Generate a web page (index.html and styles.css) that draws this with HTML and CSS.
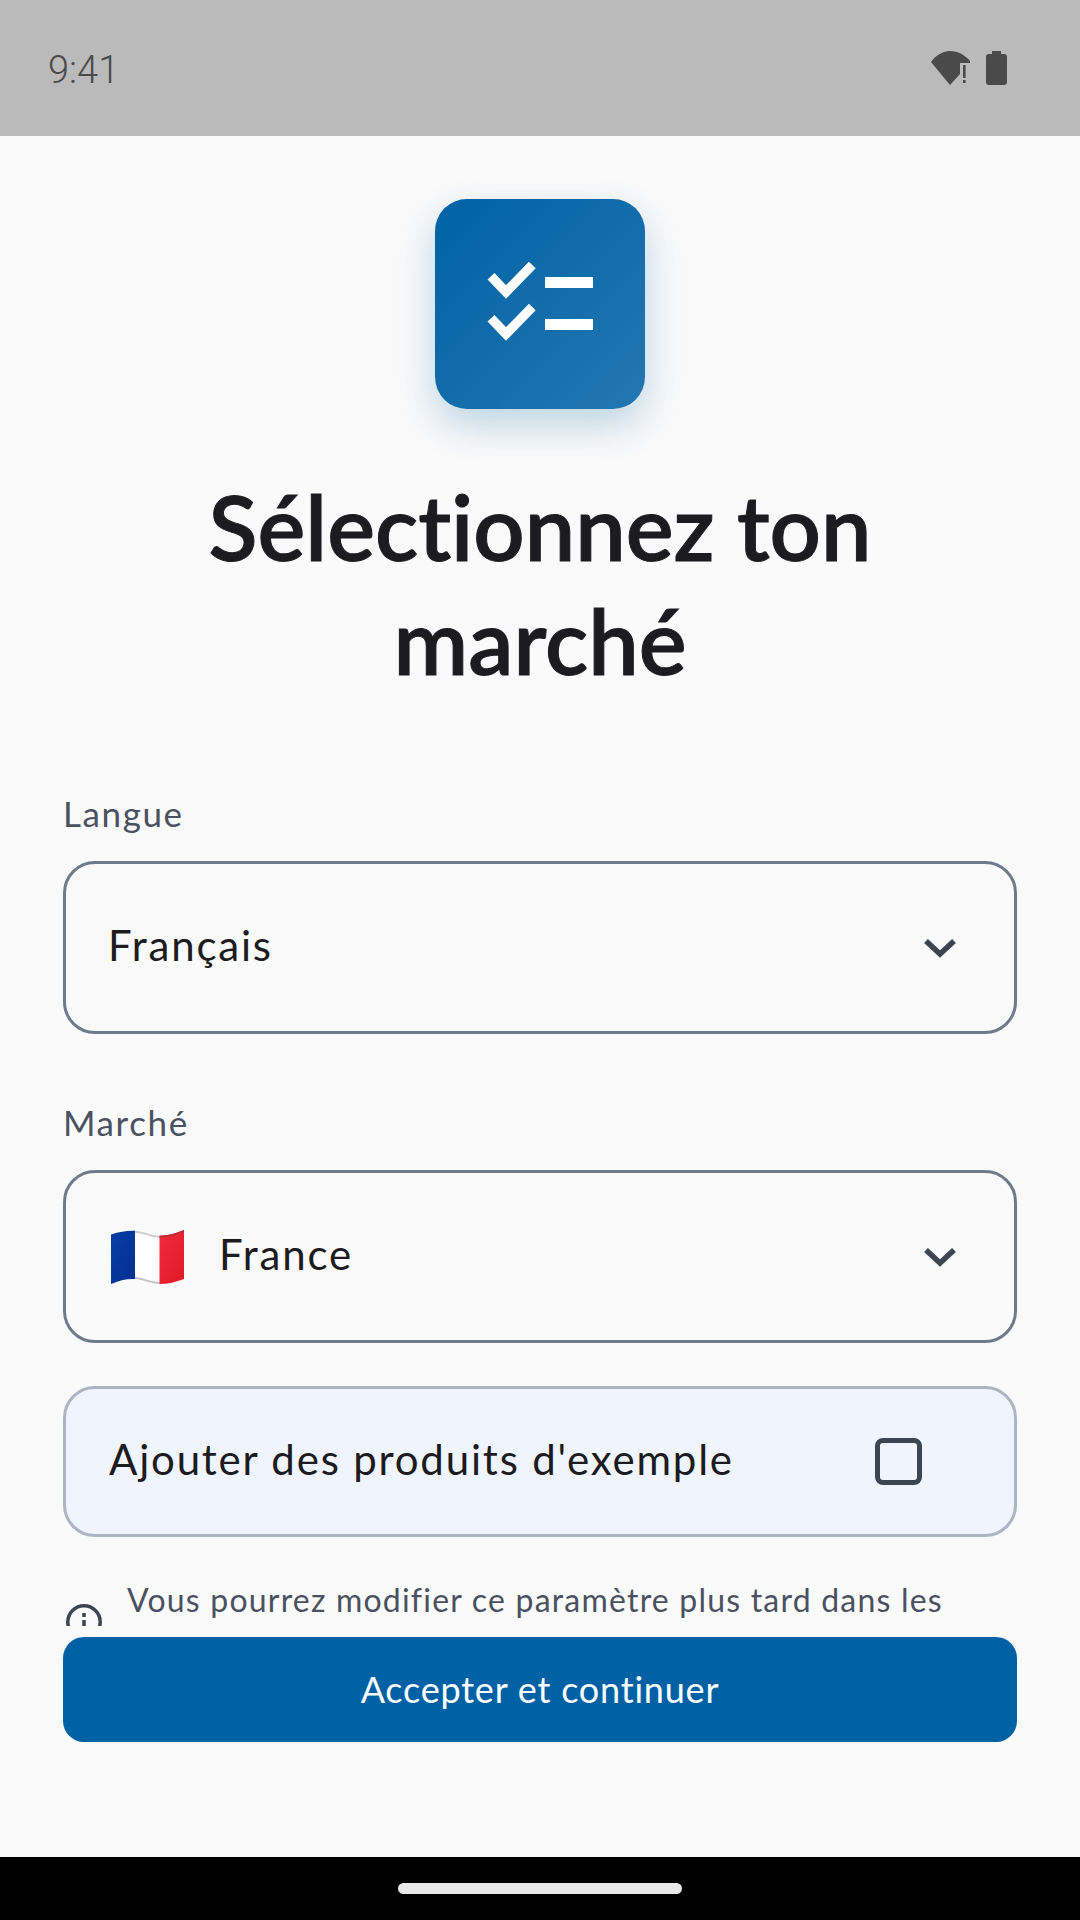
FILE: index.html
```html
<!DOCTYPE html>
<html lang="fr">
<head>
    <meta charset="UTF-8">
    <meta name="viewport" content="width=device-width, initial-scale=1.0">
    <title>Sélectionnez ton marché</title>
    <link rel="stylesheet" href="styles.css">
</head>
<body>

    <div class="screen">

        <!-- Status bar -->
        <div class="status-bar">
            <span class="clock">9:41</span>
            <div class="status-icons">
                <svg class="wifi-icon" width="39" height="34" viewBox="0 0 39 34">
                    <path d="M0 11 C5 4 12 0 19 0 C27 0 34 4 39 10 V12 H29 V23 L19 34 Z" fill="#4a4a4a"/>
                    <rect x="32" y="14" width="2.6" height="13" fill="#4a4a4a"/>
                    <rect x="32" y="29" width="2.6" height="3" fill="#4a4a4a"/>
                </svg>
                <svg class="battery-icon" width="21" height="34" viewBox="0 0 21 34">
                    <path d="M6 0 H15 V3 H18 Q21 3 21 6 V31 Q21 34 18 34 H3 Q0 34 0 31 V6 Q0 3 3 3 H6 Z" fill="#4a4a4a"/>
                </svg>
            </div>
        </div>

        <div class="content">
            <div class="logo">
                <svg width="210" height="210" viewBox="0 0 210 210">
                    <path d="M56 77.3 L71 93 L97.3 66" class="logo-stroke"/>
                    <path d="M56 119.3 L71 135 L97.3 108" class="logo-stroke"/>
                    <rect x="110" y="78" width="48" height="11" fill="#fff"/>
                    <rect x="110" y="120" width="48" height="11" fill="#fff"/>
                </svg>
            </div>

            <h1 class="title">Sélectionnez ton<br>marché</h1>

            <div class="field-label">Langue</div>
            <div class="select">
                <span class="select-text">Français</span>
                <svg class="chevron" width="32" height="20" viewBox="0 0 32 20">
                    <path d="M2 3 L16 16 L30 3"/>
                </svg>
            </div>

            <div class="field-label label-market">Marché</div>
            <div class="select">
                <svg class="flag" width="73" height="54" viewBox="0 0 73 54">
                    <defs>
                        <linearGradient id="flagBlue" x1="0" y1="0" x2="1" y2="1">
                            <stop offset="0" stop-color="#0a3fa6"/>
                            <stop offset="1" stop-color="#002f8f"/>
                        </linearGradient>
                        <linearGradient id="flagRed" x1="0" y1="0" x2="1" y2="1">
                            <stop offset="0" stop-color="#f12c3c"/>
                            <stop offset="1" stop-color="#e01828"/>
                        </linearGradient>
                    </defs>
                    <path d="M0 4.5 C8 1.5 16 .5 24 .7 V49 C16 48.5 8 50.5 0 54 Z" fill="url(#flagBlue)"/>
                    <path d="M24 .7 C32 1 40 5.5 48.5 5.7 V54 C40 54 32 49.5 24 49 Z" fill="#fff"/>
                    <path d="M24 .7 C32 1 40 5.5 48.5 5.7 V7.7 C40 7.5 32 3 24 2.7 Z" fill="#cfcfcf"/>
                    <path d="M24 47 C32 47.5 40 52 48.5 52 V54 C40 54 32 49.5 24 49 Z" fill="#c4c4c4"/>
                    <path d="M48.5 5.7 C57 5.7 65 3.5 73 0 V49 C65 52 57 54 48.5 54 Z" fill="url(#flagRed)"/>
                    <path d="M48.5 5.7 C57 5.7 65 3.5 73 0 V2 C65 5.5 57 7.7 48.5 7.7 Z" fill="#c12a36"/>
                </svg>
                <span class="select-text">France</span>
                <svg class="chevron" width="32" height="20" viewBox="0 0 32 20">
                    <path d="M2 3 L16 16 L30 3"/>
                </svg>
            </div>

            <div class="sample-row">
                <span class="select-text">Ajouter des produits d'exemple</span>
                <div class="checkbox"></div>
            </div>

            <!-- second line of this note is hidden under the footer -->
            <div class="info-row">
                <svg class="info-icon" width="36" height="36" viewBox="0 0 36 36">
                    <circle cx="18" cy="18" r="16.2"/>
                    <path d="M18 9 V13 M18 16 V26"/>
                </svg>
                <p class="info-text">Vous pourrez modifier ce paramètre plus tard dans les</p>
            </div>
        </div>

        <div class="footer">
            <div class="button">Accepter et continuer</div>
        </div>

        <!-- Nav bar -->
        <div class="nav-bar">
            <div class="home-handle"></div>
        </div>

    </div>

</body>
</html>
```

FILE: styles.css
```css
body {
    margin: 0;
    font-family: "Lato", "Noto Sans", sans-serif;
    font-variant-ligatures: none;
    background-color: #fafafa;
}

.screen {
    width: 1080px;
    height: 1920px;
    display: flex;
    flex-direction: column;
    overflow: hidden;
}

.status-bar {
    height: 136px;
    flex-shrink: 0;
    background-color: #bababa;
    display: flex;
    align-items: center;
    justify-content: space-between;
    padding: 4px 73px 0 48px;
    box-sizing: border-box;
}

.clock {
    font-family: "Roboto", sans-serif;
    font-size: 38px;
    font-weight: 300;
    color: #4a4a4a;
}

.status-icons {
    display: flex;
    align-items: center;
    gap: 16px;
    margin-top: -4px;
}

.content {
    height: 1490px;
    flex-shrink: 0;
    overflow: hidden;
    padding: 63px 63px 0;
    box-sizing: border-box;
    display: flex;
    flex-direction: column;
}

.logo {
    width: 210px;
    height: 210px;
    flex-shrink: 0;
    align-self: center;
    border-radius: 32px;
    background: linear-gradient(135deg, #0062a5, #2477b1);
    box-shadow: 0px 16px 40px rgba(0, 98, 165, 0.25);
}

.logo svg {
    display: block;
}

.logo-stroke {
    fill: none;
    stroke: #fff;
    stroke-width: 9.5;
}

.title {
    margin: 60px 0 0;
    font-size: 90px;
    line-height: 114px;
    font-weight: 600;
    -webkit-text-stroke: 1px #1c1c20;
    text-align: center;
    color: #1c1c20;
}

.field-label {
    margin-top: 94px;
    font-size: 35px;
    line-height: 44px;
    letter-spacing: 1.6px;
    color: #4a5160;
}

.label-market {
    margin-top: 66px;
}

.select {
    height: 173px;
    flex-shrink: 0;
    margin-top: 26px;
    border: 3px solid #6f7a8a;
    border-radius: 32px;
    box-sizing: border-box;
    display: flex;
    align-items: center;
    padding: 0 58px 0 42px;
    gap: 35px;
}

.select-text {
    font-size: 42px;
    letter-spacing: 1.8px;
    color: #1c1c20;
    flex-grow: 1;
    margin-bottom: 5px;
}

.flag {
    flex-shrink: 0;
    margin-left: 3px;
}

.chevron path {
    fill: none;
    stroke: #3d4452;
    stroke-width: 5.5;
}

.sample-row {
    height: 151px;
    flex-shrink: 0;
    margin-top: 43px;
    background-color: #f0f4fd;
    border: 3px solid #adb4c2;
    border-radius: 32px;
    box-sizing: border-box;
    display: flex;
    align-items: center;
    padding: 0 92px 0 43px;
}

.checkbox {
    width: 47px;
    height: 47px;
    flex-shrink: 0;
    border: 5px solid #3d4452;
    border-radius: 8px;
    box-sizing: border-box;
}

.info-row {
    height: 88px;
    margin-top: 41px;
    flex-shrink: 0;
    display: flex;
    align-items: center;
    gap: 25px;
}

.info-icon {
    flex-shrink: 0;
    margin-left: 3px;
}

.info-icon circle,
.info-icon path {
    fill: none;
    stroke: #3d4452;
    stroke-width: 3.5;
}

.info-text {
    align-self: flex-start;
    margin: 0;
    font-size: 32px;
    line-height: 44px;
    letter-spacing: 1.2px;
    color: #4a5160;
}

.footer {
    flex-grow: 1;
    padding: 11px 63px 0;
}

.button {
    height: 105px;
    background-color: #0062a5;
    border-radius: 21px;
    display: flex;
    align-items: center;
    justify-content: center;
    padding-bottom: 2px;
    box-sizing: border-box;
    font-size: 36px;
    letter-spacing: 0.8px;
    color: white;
}

.nav-bar {
    height: 63px;
    flex-shrink: 0;
    background-color: #000;
    display: flex;
    justify-content: center;
    padding-top: 26px;
    box-sizing: border-box;
}

.home-handle {
    width: 284px;
    height: 11px;
    border-radius: 6px;
    background-color: #e8e8e8;
}
```
